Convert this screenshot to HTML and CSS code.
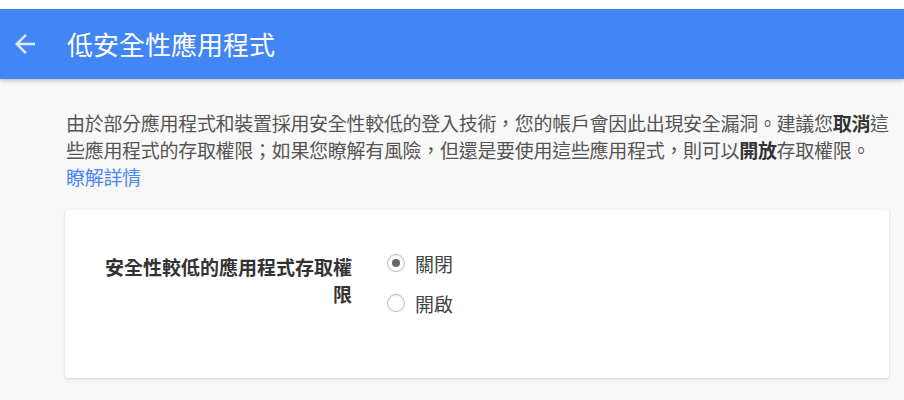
FILE: index.html
```html
<!DOCTYPE html>
<html lang="zh-Hant">
<head>
<meta charset="utf-8">
<title>低安全性應用程式</title>
<link rel="stylesheet" href="styles.css">
</head>
<body>
<div class="page">
  <header class="topbar">
    <a class="back" href="#">
      <svg viewBox="0 0 24 24" width="30" height="30"><path d="M20 11H7.83l5.59-5.59L12 4l-8 8 8 8 1.41-1.41L7.83 13H20v-2z"/></svg>
    </a>
    <h1 class="title">低安全性應用程式</h1>
  </header>
  <main class="content">
    <p class="intro">由於部分應用程式和裝置採用安全性較低的登入技術，您的帳戶會因此出現安全漏洞。建議您<b>取消</b>這些應用程式的存取權限；如果您瞭解有風險，但還是要使用這些應用程式，則可以<b>開放</b>存取權限。<br><a class="more" href="#">瞭解詳情</a></p>
    <section class="card">
      <div class="label">安全性較低的應用程式存取權限</div>
      <div class="options">
        <label class="option"><span class="radio checked"></span>關閉</label>
        <label class="option"><span class="radio"></span>開啟</label>
      </div>
    </section>
  </main>
</div>
</body>
</html>
```
FILE: styles.css
```css
html,body{margin:0;padding:0;background:#fff;}
body{font-family:"Noto Sans CJK TC","Noto Sans",sans-serif;}
.page{padding-top:9px;}
.topbar{height:70px;background:#4285f4;display:flex;align-items:center;box-shadow:0 2px 4px rgba(0,0,0,.22);position:relative;z-index:1;}
.back{display:flex;margin-left:10px;fill:rgba(255,255,255,.82);}
.title{margin:0 0 0 27px;font-size:26px;font-weight:400;color:#fff;line-height:30px;}
.content{background:#f8f8f8;padding:30px 15px 0 65px;height:321px;box-sizing:border-box;overflow:hidden;}
.intro{margin:0 -6px 20px 1px;font-size:19px;line-height:27px;color:#555;letter-spacing:-0.3px;}
.intro b{color:#333;font-weight:700;}
.more{color:#4a86f0;text-decoration:none;}
.card{width:824px;background:#fff;border-radius:3px;box-shadow:0 1px 3px rgba(0,0,0,.16);display:flex;padding:33px 0 55px;box-sizing:border-box;height:168px;}
.label{width:255px;margin:10px 0 0 32px;text-align:right;font-size:19px;line-height:27px;font-weight:700;color:#333;}
.options{margin-left:35px;display:flex;flex-direction:column;}
.option{height:40px;display:flex;align-items:center;font-size:19px;color:#444;}
.radio{width:16px;height:16px;border:1px solid #bbb;border-radius:50%;margin-right:10px;position:relative;box-shadow:inset 0 1px 2px rgba(0,0,0,.08);}
.radio.checked::after{content:"";position:absolute;left:4px;top:4px;width:8px;height:8px;border-radius:50%;background:#666;}
```
